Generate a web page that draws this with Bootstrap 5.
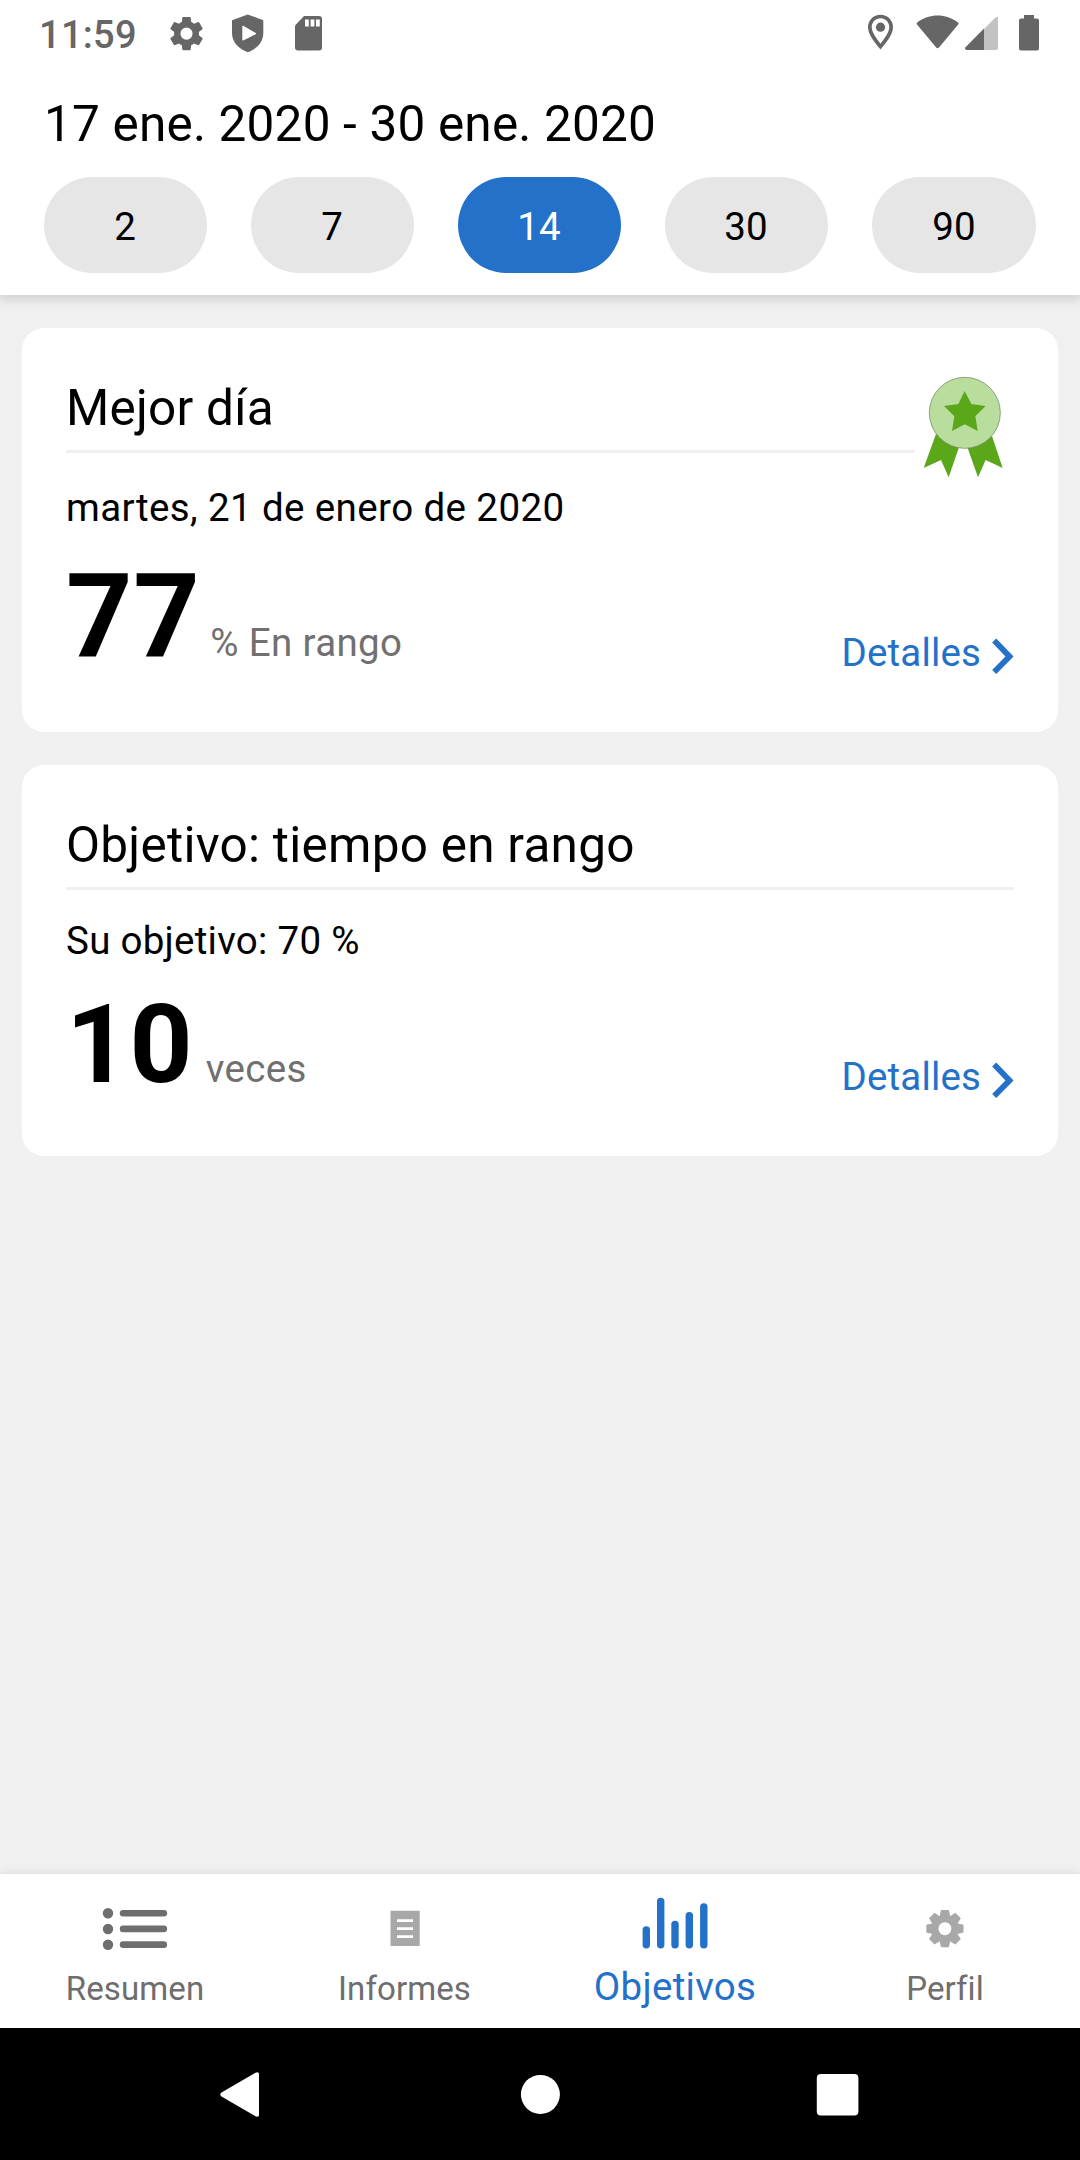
<!DOCTYPE html>
<html lang="es">
<head>
<meta charset="utf-8">
<meta name="viewport" content="width=device-width, initial-scale=1">
<title>Objetivos</title>
<link href="https://cdn.jsdelivr.net/npm/bootstrap@5.3.0/dist/css/bootstrap.min.css" rel="stylesheet">
<style>
  body { font-family: Roboto, "Noto Sans", sans-serif; background: #f0f0f0; color: #000; font-size: 38.5px; line-height: 46px; }
  svg { display: block; flex: none; }
  .screen { width: 1080px; height: 2160px; overflow: hidden; }
  .app-header { height: 295px; background: #fff; box-shadow: 0 3px 10px 2px rgba(0,0,0,.13); z-index: 1; }
  .status-bar { height: 66px; color: #666; padding-left: 39px; padding-right: 41px; }
  .clock { font-size: 38px; font-weight: 500; line-height: 70px; letter-spacing: .3px; width: 131px; }
  .period { font-size: 49.5px; line-height: 60px; letter-spacing: .19px; padding-top: 28px; margin-bottom: 23px; }
  .side-pad { padding-left: 44px; padding-right: 44px; }
  .pills { gap: 44px; }
  .pill { flex: 0 0 163px; height: 96px; padding: 0 1px 0 0; border: 0; font-size: 38.5px; line-height: 99px; background: #e6e6e6; color: #000; }
  .pill:last-child { flex-basis: 164px; padding-right: 0; }
  .pill.active { background: #2371c9; color: #fff; }
  .goal-list { padding: 33px 22px; gap: 33px; }
  .goal { border: 0; border-radius: 22px; padding: 50px 44px 0; }
  .goal-best { height: 404px; }
  .goal-target { height: 391px; }
  .goal-title { font-size: 49.5px; font-weight: 400; line-height: 60px; letter-spacing: .25px; padding-bottom: 12px; border-bottom: 3px solid #f0f0f0; margin: 0; }
  .goal-best .goal-title { margin-right: 99px; }
  .goal-best .subtitle { margin: 32px 0 25px; letter-spacing: .4px; }
  .goal-target .subtitle { margin: 28px 0 25px; letter-spacing: .27px; }
  .figure-num { font-weight: 700; }
  .goal-best .figure-num { font-size: 116px; line-height: 120px; letter-spacing: .6px; }
  .goal-target .figure-num { font-size: 110px; line-height: 111px; letter-spacing: .3px; }
  .unit { color: #707070; margin-left: 10px; letter-spacing: .35px; }
  .goal-target .unit { margin-left: 13px; }
  .details { color: #2371c9; letter-spacing: .15px; }
  .details svg { margin: 8px 0 0 11px; }
  .medal { position: absolute; top: 48px; right: 55px; }
  .tab-bar { height: 154px; background: #fff; color: #6e6e6e; box-shadow: 0 -1px 8px rgba(0,0,0,.09); }
  .tab { flex: 1 1 0; font-size: 33px; letter-spacing: .1px; }
  .tab svg { height: 92px; width: 80px; }
  .tab.active { color: #2371c9; font-size: 38.5px; letter-spacing: .3px; }
  .tab.active span { margin-top: -2px; }
  .tab-reports span { padding-right: 1px; }
  .sys-nav { height: 132px; background: #000; }
</style>
</head>
<body>
<div class="screen d-flex flex-column">
  <header class="app-header position-relative">
    <div class="status-bar d-flex">
      <div class="clock">11:59</div>
      <svg width="34" height="66" viewBox="170 0 34 66" fill="#666"><g transform="translate(186.5 33.6) scale(1.73) translate(-12 -12)"><path d="M19.14 12.94c.04-.3.06-.61.06-.94s-.02-.64-.07-.94l2.03-1.58a.49.49 0 0 0 .12-.61l-1.92-3.32a.49.49 0 0 0-.59-.22l-2.39.96c-.5-.38-1.03-.7-1.62-.94l-.36-2.54a.48.48 0 0 0-.48-.41h-3.84a.47.47 0 0 0-.47.41l-.36 2.54c-.59.24-1.13.57-1.62.94l-2.39-.96a.48.48 0 0 0-.59.22L2.74 8.87a.47.47 0 0 0 .12.61l2.03 1.58c-.05.3-.09.63-.09.94s.02.64.07.94l-2.03 1.58a.49.49 0 0 0-.12.61l1.92 3.32c.12.22.37.29.59.22l2.39-.96c.5.38 1.03.7 1.62.94l.36 2.54c.05.24.24.41.48.41h3.84c.24 0 .44-.17.47-.41l.36-2.54c.59-.24 1.13-.56 1.62-.94l2.39.96c.22.08.47 0 .59-.22l1.92-3.32a.47.47 0 0 0-.12-.61zM12 15.5a3.5 3.5 0 1 1 0-7 3.5 3.5 0 0 1 0 7z"/></g></svg>
      <svg class="ms-4" width="36" height="66" viewBox="228 0 36 66"><path fill="#666" d="M247.7 14.5 263.3 20.3V33c0 9-6.5 16-15.6 19.2C238.500 49 232 42 232 33V20.300z"/><path fill="#fff" d="M242.300 26.500v13.300q.3 1 1.400.5l12-6q.8-.7 0-1.400l-12-7q-1-.5-1.400.6z"/></svg>
      <svg width="58" height="66" viewBox="264 0 58 66"><path fill="#666" d="M304 16h15q3 0 3 3v28.500q0 3-3 3h-21q-3 0-3-3V25.500z"/><path fill="#fff" d="M305 19.500h3.800v7H305zM310.600 19.500h3.800v7h-3.800zM316 19.500h3.800v7H316z"/></svg>
      <svg class="ms-auto" width="26" height="66" viewBox="868 0 26 66"><path fill="#666" fill-rule="evenodd" d="M880.500 14.700c-7 0-12.500 5.500-12.500 12.300 0 8.500 8 16.500 12.500 22.500 4.500-6 12.500-14 12.500-22.500 0-6.800-5.500-12.300-12.500-12.300zm0 3.500c4.900 0 8.800 4 8.800 8.800 0 5.500-5 11.500-8.800 16.700-3.800-5.200-8.800-11.200-8.800-16.700 0-4.800 3.900-8.800 8.800-8.800z"/><circle cx="880.500" cy="27.200" r="4.600" fill="#666"/></svg>
      <svg width="65" height="66" viewBox="894 0 65 66"><path fill="#666" d="M917.200 22.500c6-4.800 13.300-7 20.400-7s14.400 2.200 20.400 7q1 1 .2 2l-19.200 23q-1.400 1.400-2.800 0l-19.200-23q-.8-1 .2-2z"/></svg>
      <svg width="39" height="66" viewBox="959 0 39 66"><path fill="#c2c2c2" d="M984 29l11.500-11.500q2.500-1.500 2.500.5v30q0 2-2 2h-12z"/><path fill="#666" d="M984 28.500V50h-17q-3-.3-1.500-2.800z"/></svg>
      <svg width="41" height="66" viewBox="998 0 41 66"><path fill="#666" d="M1024 15h10v3.500h3q2 0 2 2v28q0 2-2 2h-16q-2 0-2-2v-28q0-2 2-2h3z"/></svg>
    </div>
    <div class="side-pad">
      <div class="period">17 ene. 2020 - 30 ene. 2020</div>
      <div class="pills d-flex">
        <button class="btn pill rounded-pill">2</button>
        <button class="btn pill rounded-pill">7</button>
        <button class="btn pill rounded-pill active">14</button>
        <button class="btn pill rounded-pill">30</button>
        <button class="btn pill rounded-pill">90</button>
      </div>
    </div>
  </header>

  <main class="goal-list d-flex flex-column flex-grow-1">
    <section class="card goal goal-best">
      <h2 class="goal-title">Mejor día</h2>
      <svg class="medal" width="80" height="102" viewBox="368 108 240 306"><g fill="#5aa719"><path d="M407 282 370 384l52-24 23 52 33-96zM575 288l32 96-51-24-23 52-34-96z"/></g><circle cx="493.500" cy="218.500" r="106.500" fill="#b9dd9d" stroke="#6f8562" stroke-width="2.200"/><path fill="#5aa719" d="M493 153l20 39 43 6-31 31 7 44-39-20-38 20 7-44-31-31 43-6z"/></svg>
      <div class="subtitle">martes, 21 de enero de 2020</div>
      <div class="d-flex align-items-baseline">
        <span class="figure-num">77</span><span class="unit">% En rango</span>
        <a class="details d-flex text-decoration-none ms-auto align-self-end" href="#">Detalles<svg width="22" height="38" viewBox="0 0 22 38"><path d="M2.200 2.500 17.500 18.500 2.200 34" fill="none" stroke="#2371c9" stroke-width="5.800"/></svg></a>
      </div>
    </section>
    <section class="card goal goal-target">
      <h2 class="goal-title">Objetivo: tiempo en rango</h2>
      <div class="subtitle">Su objetivo: 70 %</div>
      <div class="d-flex align-items-baseline">
        <span class="figure-num">10</span><span class="unit">veces</span>
        <a class="details d-flex text-decoration-none ms-auto align-self-end" href="#">Detalles<svg width="22" height="38" viewBox="0 0 22 38"><path d="M2.200 2.500 17.500 18.500 2.200 34" fill="none" stroke="#2371c9" stroke-width="5.800"/></svg></a>
      </div>
    </section>
  </main>

  <nav class="tab-bar d-flex position-relative">
    <div class="tab d-flex flex-column align-items-center">
      <svg viewBox="95 1874 80 92" fill="#6e6e6e"><circle cx="108" cy="1913.200" r="5.200"/><circle cx="108" cy="1929" r="5.200"/><circle cx="108" cy="1944.800" r="5.200"/><rect x="119.800" y="1909.900" width="47.300" height="6.700" rx="3.300"/><rect x="119.800" y="1925.600" width="47.300" height="6.700" rx="3.300"/><rect x="119.800" y="1941.300" width="47.300" height="6.700" rx="3.300"/></svg>
      <span>Resumen</span>
    </div>
    <div class="tab tab-reports d-flex flex-column align-items-center">
      <svg viewBox="365 1874 80 92"><path fill="#a8a8a8" d="M390.500 1910.700h29.200v35.400h-29.200z"/><path fill="#fff" d="M397 1919.300h16v2.700h-16zM397 1927.300h16v2.700h-16zM397 1935.300h16v2.700h-16z"/></svg>
      <span>Informes</span>
    </div>
    <div class="tab active d-flex flex-column align-items-center">
      <svg viewBox="635 1874 80 92" fill="#2371c9"><rect x="642.600" y="1926.200" width="7.400" height="22.200" rx="3.600"/><rect x="657" y="1897.700" width="7.400" height="50.700" rx="3.600"/><rect x="671.300" y="1920.700" width="7.400" height="27.700" rx="3.600"/><rect x="685.600" y="1911.900" width="7.400" height="36.500" rx="3.600"/><rect x="700.100" y="1903.300" width="7.400" height="45.100" rx="3.600"/></svg>
      <span>Objetivos</span>
    </div>
    <div class="tab d-flex flex-column align-items-center">
      <svg viewBox="905 1874 80 92"><g transform="translate(944.900 1928.700)" fill="#a8a8a8"><path id="tooth" d="M-5.500-11.500-3.900-18.600h7.800L5.500-11.500z"/><use href="#tooth" transform="rotate(45)"/><use href="#tooth" transform="rotate(90)"/><use href="#tooth" transform="rotate(135)"/><use href="#tooth" transform="rotate(180)"/><use href="#tooth" transform="rotate(225)"/><use href="#tooth" transform="rotate(270)"/><use href="#tooth" transform="rotate(315)"/><circle r="12.900"/><circle r="6.500" fill="#fff"/></g></svg>
      <span>Perfil</span>
    </div>
  </nav>

  <div class="sys-nav d-flex position-relative">
    <svg width="1080" height="132" viewBox="0 2028 1080 132" fill="#fff"><path d="M221.500 2092.500 255.500 2072.800q3.500-1.500 3.500 1.500v40.500q0 3-3.500 1.500L221.500 2096.500q-2.500-2 0-4z"/><circle cx="540.400" cy="2094.400" r="19.500"/><rect x="816.800" y="2074" width="41.600" height="41.500" rx="4"/></svg>
  </div>
</div>
<script src="https://cdn.jsdelivr.net/npm/bootstrap@5.3.0/dist/js/bootstrap.bundle.min.js"></script>
</body>
</html>
